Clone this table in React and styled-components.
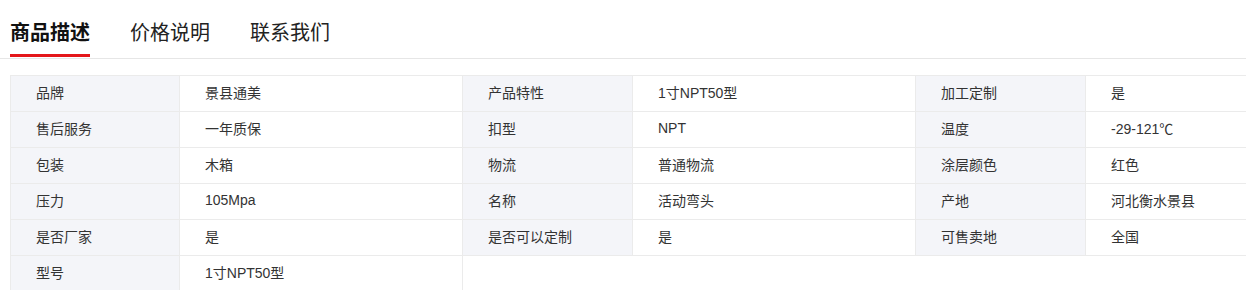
import React from 'react'
import styled, { createGlobalStyle } from 'styled-components'

const GlobalStyle = createGlobalStyle`
    html, body {
        margin: 0;
        padding: 0;
        background: #fff;
        overflow: hidden;
    }
    body {
        font-family: "Liberation Sans", "Noto Sans CJK SC", sans-serif;
        color: #333;
    }
`

const Page = styled.div`
    width: 1246px;
    height: 290px;
    padding-left: 10px;
    box-sizing: border-box;
    overflow: hidden;
`

const TabBar = styled.div`
    display: flex;
    align-items: flex-start;
    gap: 40px;
    height: 58px;
    border-bottom: 1px solid #e6e6e6;
    margin-left: -10px;
    padding-left: 10px;
`

const Tab = styled.div`
    height: 57px;
    box-sizing: border-box;
    padding-top: 19px;
    font-size: 20px;
    line-height: 28px;
    color: ${(p) => (p.active ? '#111' : '#222')};
    font-weight: ${(p) => (p.active ? 700 : 400)};
    border-bottom: 3px solid ${(p) => (p.active ? '#e4161a' : 'transparent')};
`

const Table = styled.div`
    margin-top: 16px;
    width: 1360px;
    border-top: 1px solid #ebebeb;
`

const Row = styled.div`
    display: flex;
    height: 36px;
`

const Cell = styled.div`
    box-sizing: border-box;
    height: 36px;
    display: flex;
    align-items: center;
    padding: 0 0 3px 25px;
    font-size: 14px;
    color: #333;
    border-bottom: 1px solid #ebebeb;
    border-right: 1px solid #ebebeb;
    border-left: ${(p) => (p.first ? '1px solid #ebebeb' : 'none')};
    width: ${(p) => (p.label ? 170 : 283)}px;
    background: ${(p) => (p.label ? '#f4f5f9' : '#fff')};
`

const rows = [
    ['品牌', '景县通美', '产品特性', '1寸NPT50型', '加工定制', '是'],
    ['售后服务', '一年质保', '扣型', 'NPT', '温度', '-29-121℃'],
    ['包装', '木箱', '物流', '普通物流', '涂层颜色', '红色'],
    ['压力', '105Mpa', '名称', '活动弯头', '产地', '河北衡水景县'],
    ['是否厂家', '是', '是否可以定制', '是', '可售卖地', '全国'],
    ['型号', '1寸NPT50型'],
]

export default function App() {
    return (
        <Page>
            <GlobalStyle />
            <TabBar>
                <Tab active>商品描述</Tab>
                <Tab>价格说明</Tab>
                <Tab>联系我们</Tab>
            </TabBar>
            <Table>
                {rows.map((r, i) => (
                    <Row key={i}>
                        {r.map((text, j) => (
                            <Cell key={j} label={j % 2 === 0} first={j === 0}>
                                {text}
                            </Cell>
                        ))}
                    </Row>
                ))}
            </Table>
        </Page>
    )
}
